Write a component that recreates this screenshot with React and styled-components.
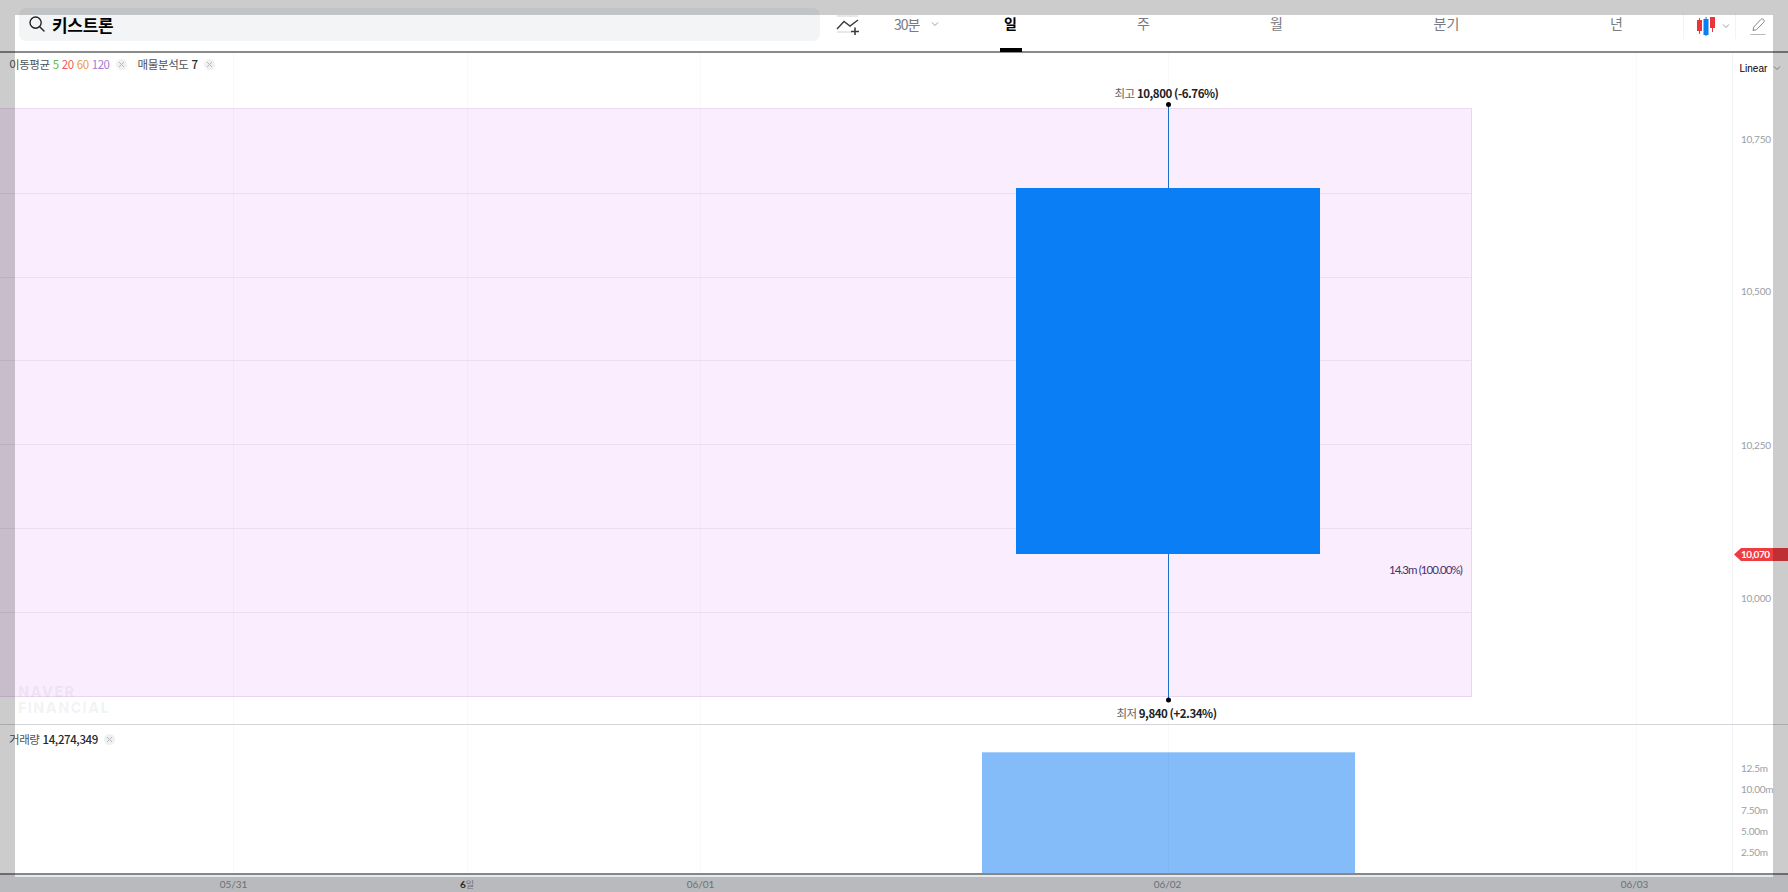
import React from "react";
import styled, { createGlobalStyle } from "styled-components";

const GRID_X = [233.5, 467, 700.5, 1168, 1636];
const BAND_LINES = [193, 277, 360, 444, 528, 612];
const PRICE_TICKS = [
  { y: 139, label: "10,750" },
  { y: 291, label: "10,500" },
  { y: 445, label: "10,250" },
  { y: 598, label: "10,000" },
];
const VOLUME_TICKS = [
  { y: 43, label: "12.5m" },
  { y: 64, label: "10.00m" },
  { y: 85, label: "7.50m" },
  { y: 106, label: "5.00m" },
  { y: 127, label: "2.50m" },
];
const TABS = [
  { label: "일", width: 133, active: true },
  { label: "주", width: 133 },
  { label: "월", width: 133 },
  { label: "분기", width: 207 },
  { label: "년", width: 133 },
];
const DATES = [
  { label: "05/31" },
  { label: "6", suffix: "일" },
  { label: "06/01" },
  { label: "" },
  { label: "06/02" },
  { label: "" },
  { label: "06/03" },
];

const KR = `"Noto Sans CJK KR", "Noto Sans", sans-serif`;

const GlobalStyle = createGlobalStyle`
  html, body {
    margin: 0;
    padding: 0;
    background: #fff;
    overflow: hidden;
  }
  * { box-sizing: border-box; }
`;

const Page = styled.div`
  display: flex;
  flex-direction: column;
  width: 1788px;
  height: 892px;
  background: #fff;
  font-family: ${KR};
`;

// dim frame of the layer that sits on top of the chart page
const Frame = styled.div`
  position: fixed;
  top: 0;
  left: 0;
  width: 1788px;
  height: 892px;
  border: 15px solid rgba(0, 0, 0, 0.2);
  pointer-events: none;
`;

const Header = styled.header`
  display: flex;
  align-items: center;
  flex: none;
  height: 53px;
  padding: 8px 0 11px 19px;
  border-bottom: 2px solid #888a8c;
`;

const SearchBox = styled.div`
  display: flex;
  align-items: center;
  gap: 6px;
  width: 801px;
  height: 33px;
  padding-left: 9px;
  background: #f3f4f6;
  border-radius: 7px;
`;

const Title = styled.h1`
  margin: 1px 0 0;
  font-size: 17px;
  line-height: 20px;
  font-weight: 700;
  color: #000;
  letter-spacing: -0.3px;
`;

const IndicatorButton = styled.div`
  display: flex;
  margin: 2px 0 0 16px;
  width: 24px;
`;

const Interval = styled.div`
  display: flex;
  align-items: center;
  margin-left: 34px;
  width: 50px;
  gap: 12px;
  font-size: 14px;
  letter-spacing: -1px;
  color: #777a7e;
`;

const Tabs = styled.nav`
  display: flex;
  height: 33px;
`;

const Tab = styled.div`
  position: relative;
  display: flex;
  justify-content: center;
  align-items: center;
  flex: none;
  width: ${(p) => p.$width}px;
  padding-bottom: 3px;
  font-size: 14px;
  font-weight: ${(p) => (p.$active ? 700 : 400)};
  color: ${(p) => (p.$active ? "#000" : "#777a7e")};
`;

const TabMark = styled.span`
  position: absolute;
  left: 50%;
  bottom: -11px;
  width: 22px;
  height: 4px;
  margin-left: -11px;
  background: #000;
`;

const ChartType = styled.div`
  display: flex;
  align-items: center;
  gap: 7px;
  flex: none;
  width: 53px;
  height: 26px;
  margin-top: 4px;
  padding: 0 0 0 13px;
  border: solid #f3f3f5;
  border-width: 0 1px;
`;

const PenButton = styled.div`
  display: flex;
  margin: 4px 0 0 14px;
`;

const Pane = styled.section`
  position: relative;
  flex: none;
  height: ${(p) => p.$height}px;
  border-bottom: ${(p) => p.$line};
`;

const Plot = styled.svg`
  display: block;
  width: 1788px;
  height: 100%;
`;

const Legend = styled.div`
  position: absolute;
  left: 9px;
  top: ${(p) => p.$top}px;
  display: flex;
  align-items: center;
  height: 16px;
  font-size: 11.5px;
  letter-spacing: -0.4px;
  color: #505356;
  white-space: nowrap;
`;

const LegendGroup = styled.span`
  display: inline-flex;
  align-items: center;
  margin-right: ${(p) => p.$gap || 0}px;
`;

const Value = styled.span`
  margin-left: ${(p) => p.$gap || 3}px;
  font-weight: ${(p) => (p.$color ? 400 : 500)};
  color: ${(p) => p.$color || "#26282c"};
`;

const CloseDot = styled.span`
  display: inline-flex;
  align-items: center;
  justify-content: center;
  width: 11px;
  height: 11px;
  margin-left: 6px;
  border-radius: 50%;
  background: #eff0f1;
`;

const Watermark = styled.div`
  position: absolute;
  left: 18px;
  top: 631px;
  font-family: "Inter", sans-serif;
  font-size: 14.5px;
  line-height: 15.5px;
  font-weight: 900;
  letter-spacing: 1.2px;
  color: rgba(60, 70, 90, 0.06);
`;

const DateAxis = styled.div`
  display: flex;
  flex: 1;
  padding-left: 116.75px;
  background: #e6e9ee;
`;

const DateCell = styled.div`
  flex: none;
  width: 233.5px;
  padding-top: 2px;
  text-align: center;
  font-family: "Lato", sans-serif;
  font-size: 10px;
  line-height: 14px;
  color: #888c92;
`;

const DateStrong = styled.b`
  color: #33363a;
`;

const DateSuffix = styled.span`
  font-family: ${KR};
  font-size: 9px;
`;

const AxisText = styled.text`
  font-family: "Lato", sans-serif;
  font-size: 10px;
  letter-spacing: -0.25px;
  fill: #9a9ea5;
`;

const RangeText = styled.text`
  font-family: ${KR};
  font-size: 11.5px;
  letter-spacing: -0.45px;
  fill: #606367;
`;

const RangeValue = styled.tspan`
  font-weight: 700;
  fill: #202226;
`;

const VolumeShare = styled.text`
  font-family: "Lato", sans-serif;
  font-size: 11.5px;
  letter-spacing: -0.9px;
  fill: #46306c;
`;

const TagText = styled.text`
  font-family: "Lato", sans-serif;
  font-size: 10px;
  font-weight: 700;
  letter-spacing: -0.45px;
  fill: #fff;
`;

const ScaleText = styled.text`
  font-family: "Liberation Sans", sans-serif;
  font-size: 10px;
  fill: #000;
`;

const Chevron = ({ x = 0, y = 0 }) => (
  <path d={`M${x - 3} ${y - 1.5}L${x} ${y + 1.5}L${x + 3} ${y - 1.5}`} fill="none" stroke="#9a9da1" strokeWidth="1" />
);

const ChevronIcon = () => (
  <svg width="8" height="8" viewBox="-4 -4 8 8">
    <Chevron />
  </svg>
);

const SearchIcon = () => (
  <svg width="18" height="18" viewBox="0 0 18 18" fill="none" stroke="#222" strokeWidth="1.4">
    <circle cx="7.6" cy="7.6" r="5.6" />
    <path d="M11.7 11.7L16 16" strokeLinecap="round" />
  </svg>
);

const IndicatorIcon = () => (
  <svg width="24" height="20" viewBox="0 0 24 20" fill="none">
    <path d="M1 1H22M1 17H16" stroke="#d0d1d3" strokeWidth="1" />
    <path d="M1 14L8 6.5L14 11L22 5" stroke="#3a3c40" strokeWidth="1.4" />
    <path d="M15 16.5H23M19 12.5V20" stroke="#3a3c40" strokeWidth="1.6" />
  </svg>
);

const CandleIcon = () => (
  <svg width="18" height="19" viewBox="0 0 18 19" style={{ flex: "none" }}>
    <path d="M2.5 1V17" stroke="#e8353b" strokeWidth="1" />
    <rect x="0" y="3" width="5" height="11" fill="#e8353b" />
    <path d="M9 0V19" stroke="#0a7ef5" strokeWidth="1" />
    <rect x="6.5" y="2" width="5" height="16" fill="#0a7ef5" />
    <path d="M15.5 0V15" stroke="#e8353b" strokeWidth="1" />
    <rect x="13" y="0" width="5" height="11" fill="#e8353b" />
  </svg>
);

const PenIcon = () => (
  <svg width="16" height="17" viewBox="0 0 16 17" fill="none" stroke="#85888c" strokeWidth="1">
    <path d="M3 12.5L3.8 9L10.8 1.5C11.6 0.7 12.8 0.7 13.6 1.5C14.4 2.3 14.4 3.5 13.6 4.4L6.5 11.7Z" />
    <path d="M0.5 16.5H15.5" stroke="#b5b7ba" />
  </svg>
);

const CloseIcon = () => (
  <svg width="7" height="7" viewBox="0 0 7 7">
    <path d="M1 1L6 6M6 1L1 6" stroke="#b4b6b9" strokeWidth="1" />
  </svg>
);

const PriceChart = () => (
  <Plot viewBox="0 53 1788 671" shapeRendering="crispEdges">
    <rect x="0" y="109" width="1471" height="588" fill="#faeefe" />
    {BAND_LINES.map((y) => (
      <rect key={y} x="0" y={y} width="1471" height="1" fill="#eedcf3" />
    ))}
    <rect x="0" y="108" width="1472" height="1" fill="#eedcf3" />
    <rect x="0" y="696" width="1472" height="1" fill="#e8d7ee" />
    <rect x="1471" y="108" width="1" height="589" fill="#e8d7ee" />
    {GRID_X.map((x) => (
      <rect key={x} x={Math.floor(x)} y="53" width="1" height="671" fill="#000" fillOpacity="0.025" />
    ))}
    <rect x="1732" y="53" width="1" height="671" fill="#f2f3f4" />

    <rect x="1168" y="104" width="1" height="596" fill="#1a70cf" />
    <rect x="1016" y="188" width="304" height="366" fill="#0a7ef5" />
    <g shapeRendering="auto">
      <circle cx="1168.5" cy="104.5" r="2.5" fill="#000" />
      <circle cx="1168.5" cy="700" r="2.5" fill="#000" />
      <path d="M1734 554.5L1741 548H1788V561H1741Z" fill="#ee3d42" />
      <RangeText x="1166.5" y="98" textAnchor="middle">
        최고 <RangeValue>10,800 (-6.76%)</RangeValue>
      </RangeText>
      <RangeText x="1166.5" y="718" textAnchor="middle">
        최저 <RangeValue>9,840 (+2.34%)</RangeValue>
      </RangeText>
      <VolumeShare x="1462" y="574" textAnchor="end">14.3m (100.00%)</VolumeShare>
      {PRICE_TICKS.map((t) => (
        <AxisText key={t.label} x="1741" y={t.y + 4}>{t.label}</AxisText>
      ))}
      <TagText x="1741" y="558">10,070</TagText>
      <ScaleText x="1739.5" y="72">Linear</ScaleText>
      <Chevron x={1777} y={68} />
    </g>
  </Plot>
);

const VolumeChart = () => (
  <Plot viewBox="0 0 1788 148" shapeRendering="crispEdges">
    <rect x="982" y="27" width="373" height="121" fill="#83bcf8" />
    <rect x="982" y="27" width="373" height="1" fill="#a9d0fa" />
    {GRID_X.map((x) => (
      <rect key={x} x={Math.floor(x)} y="0" width="1" height="148" fill="#000" fillOpacity="0.025" />
    ))}
    <rect x="1732" y="0" width="1" height="148" fill="#f2f3f4" />
    <g shapeRendering="auto">
      {VOLUME_TICKS.map((t) => (
        <AxisText key={t.label} x="1741" y={t.y + 4}>{t.label}</AxisText>
      ))}
    </g>
  </Plot>
);

export default function App() {
  return (
    <>
      <GlobalStyle />
      <Page>
        <Header>
          <SearchBox>
            <SearchIcon />
            <Title>키스트론</Title>
          </SearchBox>
          <IndicatorButton>
            <IndicatorIcon />
          </IndicatorButton>
          <Interval>
            30분
            <ChevronIcon />
          </Interval>
          <Tabs>
            {TABS.map((tab) => (
              <Tab key={tab.label} $width={tab.width} $active={tab.active}>
                {tab.label}
                {tab.active && <TabMark />}
              </Tab>
            ))}
          </Tabs>
          <ChartType>
            <CandleIcon />
            <ChevronIcon />
          </ChartType>
          <PenButton>
            <PenIcon />
          </PenButton>
        </Header>

        <Pane $height={672} $line="1px solid #d3d5da">
          <PriceChart />
          <Legend $top={3}>
            <LegendGroup $gap={11}>
              이동평균
              <Value $color="#63bb4c">5</Value>
              <Value $color="#ee5b5b">20</Value>
              <Value $color="#f09a45">60</Value>
              <Value $color="#a67bd6">120</Value>
              <CloseDot><CloseIcon /></CloseDot>
            </LegendGroup>
            <LegendGroup>
              매물분석도
              <Value>7</Value>
              <CloseDot><CloseIcon /></CloseDot>
            </LegendGroup>
          </Legend>
          <Watermark>
            NAVER
            <br />
            FINANCIAL
          </Watermark>
        </Pane>

        <Pane $height={150} $line="2px solid #85878a">
          <VolumeChart />
          <Legend $top={6}>
            <LegendGroup>
              거래량
              <Value>14,274,349</Value>
              <CloseDot><CloseIcon /></CloseDot>
            </LegendGroup>
          </Legend>
        </Pane>

        <DateAxis>
          {DATES.map((d, i) => (
            <DateCell key={i}>
              {d.suffix ? (
                <>
                  <DateStrong>{d.label}</DateStrong>
                  <DateSuffix>{d.suffix}</DateSuffix>
                </>
              ) : (
                d.label
              )}
            </DateCell>
          ))}
        </DateAxis>
      </Page>
      <Frame />
    </>
  );
}
